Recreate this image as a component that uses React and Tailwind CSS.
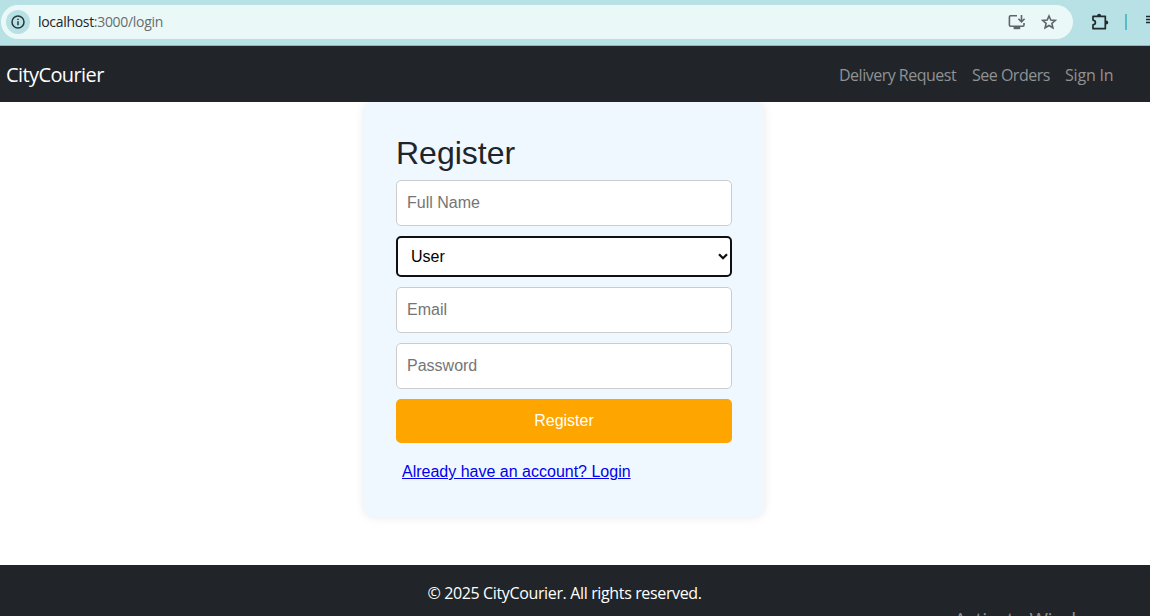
import React from "react";

const field =
  "block h-[46px] w-full rounded-[5px] border border-[#cccccc] bg-white px-2.5 text-base text-black outline-none placeholder:text-[#757575]";

function BrowserBar() {
  return (
    <div className="flex h-[46px] shrink-0 items-start overflow-hidden border-b border-[#8fb5b8] bg-[#b7e1e4] pl-px pt-[5px]">
      <div className="flex h-[34px] w-[1072px] shrink-0 items-center rounded-full bg-[#ebf8f8] pl-[5px] pr-4">
        <span className="flex h-6 w-6 items-center justify-center rounded-full bg-[#b7e1e4]">
          <svg width="14" height="14" viewBox="0 0 14 14" fill="none" stroke="#26383a" strokeWidth="1.5">
            <circle cx="7" cy="7" r="6" />
            <path d="M7 6.2V10.2M7 3.7V5.1" />
          </svg>
        </span>
        <span className="ml-2 whitespace-nowrap pb-px font-['Open_Sans',sans-serif] text-[14px] tracking-[-0.31px] text-[#666e70]">
          <span className="text-[#1f2526]">localhost</span>:3000/login
        </span>
        <svg className="ml-auto" width="18" height="16" viewBox="0 0 18 16" fill="none" stroke="#5c6668" strokeWidth="1.6">
          <path d="M9 1.8H2.6Q1.4 1.8 1.4 3V11Q1.4 12.2 2.6 12.2H14.8Q16 12.2 16 11V9" />
          <path d="M5.6 14H12.2" strokeWidth="2.4" />
          <path d="M13.5 1V7.4M10.4 4.8L13.5 7.8L16.6 4.8" />
        </svg>
        <svg className="ml-[15px]" width="16" height="16" viewBox="0 0 16 16" fill="none" stroke="#5c6668" strokeWidth="1.6">
          <path d="M8 2L9.8 6.1L14.2 6.5L10.9 9.4L11.9 13.8L8 11.5L4.1 13.8L5.1 9.4L1.8 6.5L6.2 6.1Z" />
        </svg>
      </div>
      <div className="flex h-[34px] shrink-0 items-center pl-[18px]">
        <svg className="-mt-px" width="18" height="18" viewBox="0 0 18 18">
          <path
            d="M2 3.3H14.3V15.7H2V11.9Q4.4 11.5 4.4 9.5T2 7.1Z"
            fill="none"
            stroke="#1f2a2c"
            strokeWidth="1.7"
            strokeLinejoin="round"
          />
          <path d="M6.1 3Q6.1 .8 8.1 .8T10.1 3ZM15 7.4Q17.3 7.4 17.3 9.5T15 11.6Z" fill="#1f2a2c" />
        </svg>
        <span className="ml-4 h-4 w-0.5 bg-[#55bdc6]" />
        <svg className="-mt-1 ml-[19px]" width="14" height="14" viewBox="0 0 14 14" stroke="#1f2a2c" strokeWidth="1.5">
          <path d="M0 3.5H14M0 6.5H14M0 9.5H14" />
        </svg>
      </div>
    </div>
  );
}

function Navbar() {
  return (
    <nav className="flex h-14 shrink-0 items-center justify-between bg-[#212529] pl-1.5 pr-9 pt-px font-['Open_Sans',sans-serif]">
      <a href="#" className="whitespace-nowrap text-[20px] tracking-[-0.6px] text-white">
        CityCourier
      </a>
      <div className="flex gap-4 whitespace-nowrap text-base text-[#909294]">
        <a href="#" className="w-[117px] tracking-[-0.5px]">Delivery Request</a>
        <a href="#" className="w-[77px] tracking-[-0.5px]">See Orders</a>
        <a href="#" className="w-[49px] tracking-[-0.2px]">Sign In</a>
      </div>
    </nav>
  );
}

function RegisterCard() {
  return (
    <div className="h-[415px] w-[400px] rounded-[10px] bg-[#f0f8ff] p-8 font-['Liberation_Sans',Arial,sans-serif] text-base shadow-[0_0_10px_rgba(0,0,0,0.1)]">
      <h2 className="mb-2 text-[32px] leading-[38px] text-[#212529]">Register</h2>
      <form className="flex flex-col gap-2.5" onSubmit={(e) => e.preventDefault()}>
        <input className={field} placeholder="Full Name" />
        <div className="relative">
          <select className="block h-[41px] w-full appearance-none rounded-[5px] border-2 border-[#101010] bg-white px-[13px] text-base text-black outline-none">
            <option>User</option>
            <option>Admin</option>
          </select>
          <svg className="pointer-events-none absolute right-1 top-[17px]" width="10" height="8" viewBox="0 0 10 8" fill="none" stroke="#101010" strokeWidth="2.2">
            <path d="M1 1.2L5 5.2L9 1.2" />
          </svg>
        </div>
        <input className={field} placeholder="Email" />
        <input className={field} type="password" placeholder="Password" />
        <button className="h-11 rounded-[5px] bg-[#ffa500] text-base text-white">Register</button>
      </form>
      <a href="#" className="ml-1.5 mt-[17px] inline-block text-base text-[#0000ee] underline">
        Already have an account? Login
      </a>
    </div>
  );
}

export default function App() {
  return (
    <div className="flex h-[616px] w-[1150px] flex-col overflow-hidden bg-white">
      <BrowserBar />
      <Navbar />
      <main className="flex h-[463px] shrink-0 items-start overflow-hidden pl-[364px]">
        <RegisterCard />
      </main>
      <footer className="relative flex h-[51px] shrink-0 justify-center overflow-hidden bg-[#212529] pr-[21px] pt-4 font-['Open_Sans',sans-serif] text-base tracking-[-0.36px] text-white">
        <p className="whitespace-nowrap">© 2025 CityCourier. All rights reserved.</p>
        <span className="absolute left-[954px] top-[41px] whitespace-nowrap text-[20px] leading-7 tracking-[-0.4px] text-[#8b8d8f]">
          Activate Windows
        </span>
      </footer>
    </div>
  );
}
